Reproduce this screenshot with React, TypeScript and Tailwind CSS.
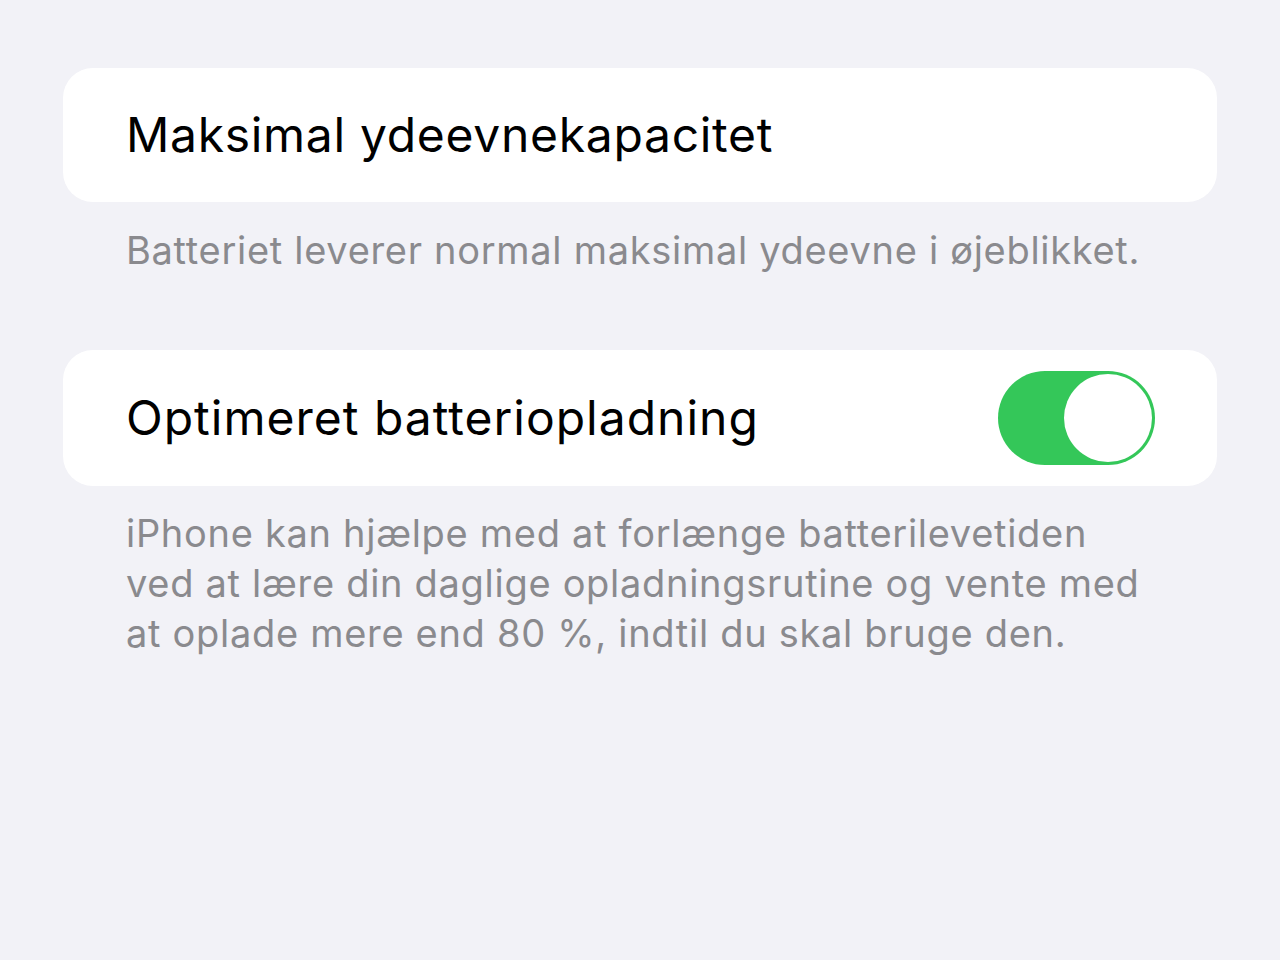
export default function App() {
  return (
    <div
      className="min-h-[960px] w-[1280px] bg-[#f2f2f7] px-[63px] pt-[68px]"
      style={{ fontFamily: "Inter, 'Noto Sans', sans-serif" }}
    >
      <section className="flex h-[134px] items-center rounded-[30px] bg-white pl-[63px]">
        <span className="text-[48px] leading-none tracking-[0.7px] text-black">
          Maksimal ydeevnekapacitet
        </span>
      </section>
      <p className="mt-[23px] pl-[63px] text-[38px] leading-[50px] tracking-[0.7px] text-[#8a8a8e]">
        Batteriet leverer normal maksimal ydeevne i øjeblikket.
      </p>

      <section className="mt-[75px] flex h-[136px] items-center justify-between rounded-[30px] bg-white pl-[63px] pr-[62px]">
        <span className="text-[48px] leading-none tracking-[1px] text-black">
          Optimeret batteriopladning
        </span>
        <div className="flex h-[94px] w-[157px] items-center justify-end rounded-full bg-[#34c759] p-[3px]">
          <div className="h-[88px] w-[88px] rounded-full bg-white" />
        </div>
      </section>
      <p className="mt-[22px] pl-[63px] text-[38px] leading-[50px] tracking-[0.7px] text-[#8a8a8e]">
        iPhone kan hjælpe med at forlænge batterilevetiden
        <br />
        ved at lære din daglige opladningsrutine og vente med
        <br />
        at oplade mere end 80 %, indtil du skal bruge den.
      </p>
    </div>
  );
}
